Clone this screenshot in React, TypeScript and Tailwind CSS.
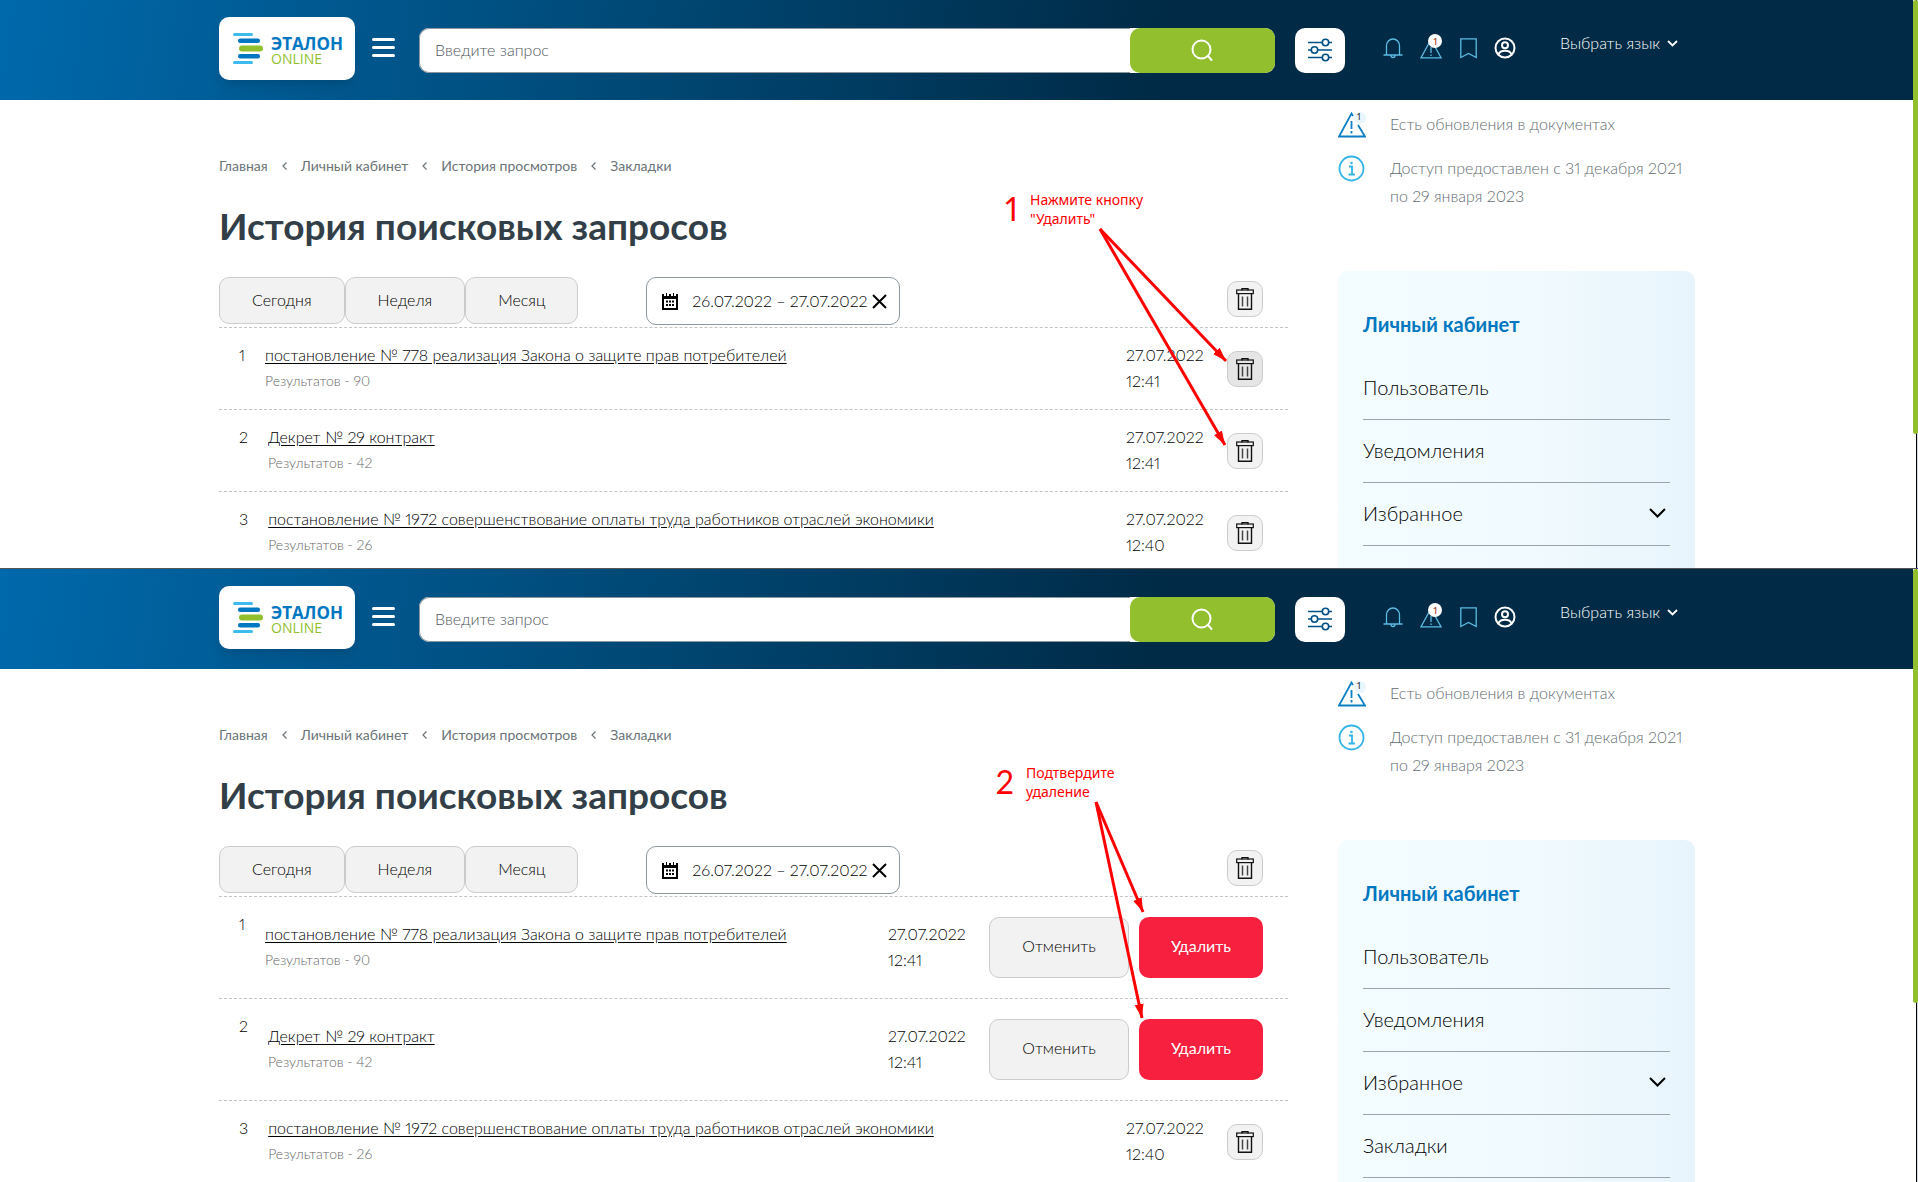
import { useState } from 'react';

type Entry = {
  title: string;
  results: number;
  date: string;
  time: string;
  active?: boolean;
  confirm?: boolean;
};

type Hint = {
  step: string;
  lines: string[];
  offset: string;
  arrows: number[][];
};

type ScreenData = {
  id: string;
  entries: Entry[];
  menu: { label: string; nested?: boolean }[];
  hint: Hint;
  frame: string;
  cardPadding: string;
};

const crumbs = ['Главная', 'Личный кабинет', 'История просмотров', 'Закладки'];
const periods = ['Сегодня', 'Неделя', 'Месяц'];

const screens: ScreenData[] = [
  {
    id: 'select',
    entries: [
      { title: 'постановление № 778 реализация Закона о защите прав потребителей', results: 90, date: '27.07.2022', time: '12:41', active: true },
      { title: 'Декрет № 29 контракт', results: 42, date: '27.07.2022', time: '12:41' },
      { title: 'постановление № 1972 совершенствование оплаты труда работников отраслей экономики', results: 26, date: '27.07.2022', time: '12:40' },
    ],
    menu: [{ label: 'Пользователь' }, { label: 'Уведомления' }, { label: 'Избранное', nested: true }],
    hint: {
      step: '1',
      lines: ['Нажмите кнопку', '"Удалить"'],
      offset: 'top-[90px] right-[144px] w-[114px]',
      arrows: [
        [132, 129, 258, 261],
        [132, 129, 257, 345],
      ],
    },
    frame: 'border-b border-[#555555]',
    cardPadding: 'pb-[22px]',
  },
  {
    id: 'confirm',
    entries: [
      { title: 'постановление № 778 реализация Закона о защите прав потребителей', results: 90, date: '27.07.2022', time: '12:41', confirm: true },
      { title: 'Декрет № 29 контракт', results: 42, date: '27.07.2022', time: '12:41', confirm: true },
      { title: 'постановление № 1972 совершенствование оплаты труда работников отраслей экономики', results: 26, date: '27.07.2022', time: '12:40' },
    ],
    menu: [{ label: 'Пользователь' }, { label: 'Уведомления' }, { label: 'Избранное', nested: true }, { label: 'Закладки' }],
    hint: {
      step: '2',
      lines: ['Подтвердите', 'удаление'],
      offset: 'top-[94px] right-[148px] w-[114px]',
      arrows: [
        [128, 133, 175, 243],
        [128, 133, 174, 349],
      ],
    },
    frame: 'flex-1',
    cardPadding: 'pb-1',
  },
];

function Logo() {
  return (
    <a href="#" aria-label="Эталон Online" className="mb-[3px] flex h-[63px] w-[136px] shrink-0 items-center gap-2 rounded-[10px] bg-white pl-[14px] shadow-lg">
      <svg width="30" height="31" viewBox="0 0 30 31" className="shrink-0">
        <rect x="0" y="0" width="20" height="3" rx="1.5" fill="#3dbbee" />
        <rect x="5" y="5.5" width="22" height="4.500" rx="2" fill="#0077c0" />
        <rect x="6" y="12.500" width="24" height="6" rx="3" fill="#92bf2e" />
        <rect x="5" y="21" width="22" height="4.500" rx="2" fill="#0077c0" />
        <rect x="0" y="28" width="20" height="3" rx="1.5" fill="#3dbbee" />
      </svg>
      <span className="flex flex-col pt-1 font-['Open_Sans',sans-serif]">
        <span className="text-[17px] leading-[16px] font-bold text-[#0077c0]">ЭТАЛОН</span>
        <span className="text-[14px] leading-[14px] font-medium text-[#92bf2e]">ONLINE</span>
      </span>
    </a>
  );
}

function TrashIcon() {
  return (
    <svg width="18" height="22" viewBox="0 0 18 22" fill="none" stroke="#111" strokeWidth="1">
      <path d="M6 2.5V.5h6v2" strokeWidth="1.4" />
      <rect x=".7" y="2" width="16.6" height="3.6" strokeWidth="1.2" />
      <path d="M2.5 5.5v15.8h13V5.5" strokeWidth="1.4" />
      <path d="M6.500 8.500v10M11.500 8.500v10" strokeWidth="1.5" stroke="#444" />
    </svg>
  );
}

function TrashButton({ label, active }: { label: string; active?: boolean }) {
  return (
    <button
      type="button"
      aria-label={label}
      className={`flex size-9 shrink-0 items-center justify-center rounded-[10px] border border-[#cccccc] ${active ? 'bg-[#e5e5e5]' : 'bg-[#f2f2f2]'}`}
    >
      <TrashIcon />
    </button>
  );
}

function Header() {
  return (
    <header className="bg-[linear-gradient(98deg,#0069ab_0%,#004a78_32%,#002a45_61%)]">
      <div className="mx-auto flex h-[100px] max-w-[1477px] items-center pl-px">
        <Logo />
        <button type="button" aria-label="Меню" className="mb-[5px] ml-[17px] flex w-[23px] shrink-0 flex-col gap-[5px]">
          <span className="h-[3px] rounded-full bg-white" />
          <span className="h-[3px] rounded-full bg-white" />
          <span className="h-[3px] rounded-full bg-white" />
        </button>

        {/* Search */}
        <form className="ml-6 flex h-[45px] flex-1 rounded-[10px] bg-white" onSubmit={(e) => e.preventDefault()}>
          <input
            type="search"
            aria-label="Поиск"
            placeholder="Введите запрос"
            className="min-w-0 flex-1 rounded-l-[10px] border border-r-0 border-[#8c979d] px-[15px] text-base placeholder:text-[#4f575d]"
          />
          <button type="submit" aria-label="Найти" className="flex w-[145px] items-center justify-center rounded-[10px] bg-[#92bf2e]">
            <svg width="24" height="24" viewBox="0 0 24 24" fill="none" stroke="#fff" strokeWidth="2" strokeLinecap="round">
              <circle cx="10.500" cy="11.500" r="9" />
              <path d="M17 18l3.500 4" />
            </svg>
          </button>
        </form>

        <button type="button" aria-label="Фильтры" className="ml-5 flex h-[45px] w-[50px] shrink-0 items-center justify-center rounded-[10px] bg-white">
          <svg width="26" height="24" viewBox="0 0 26 24" fill="none" stroke="#004f86" strokeWidth="1.600">
            <path d="M1 4.500h14M22 4.500h3M1 12h3M11 12h14M1 19.500h14M22 19.500h3" />
            <circle cx="18.500" cy="4.500" r="3.200" />
            <circle cx="7.500" cy="12" r="3.200" />
            <circle cx="18.500" cy="19.500" r="3.200" />
          </svg>
        </button>

        {/* User tools */}
        <nav className="ml-[38px] flex w-[133px] shrink-0 items-end justify-between pb-1">
          <a href="#" aria-label="Уведомления">
            <svg width="20" height="21" viewBox="0 0 20 21" fill="none" stroke="#5bbce4" strokeWidth="1.300">
              <path d="M3.500 17V8a6.500 7 0 0 1 13 0v9M.5 17h19M8 17.500a2 2 0 0 0 4 0" />
            </svg>
          </a>
          <a href="#" aria-label="Обновления" className="relative">
            <svg width="22" height="21" viewBox="0 0 22 21" fill="none" stroke="#5bbce4" strokeWidth="1.300">
              <path d="M11 1.500L1 19.800h20zM11 9v6M11 16.500v1.500" />
            </svg>
            <span className="absolute -top-1 left-2 flex size-[14px] items-center justify-center rounded-full bg-white text-[10px] leading-[14px] font-normal text-[#a03020]">1</span>
          </a>
          <a href="#" aria-label="Закладки">
            <svg width="17" height="21" viewBox="0 0 17 21" fill="none" stroke="#5bbce4" strokeWidth="1.300">
              <path d="M.8.8h15.400v18.700l-7.700-4-7.700 4z" />
            </svg>
          </a>
          <a href="#" aria-label="Профиль">
            <svg width="22" height="22" viewBox="0 0 22 22" fill="none" stroke="#fff" strokeWidth="2">
              <circle cx="11" cy="11" r="9.500" />
              <circle cx="11" cy="8.200" r="3" />
              <path d="M4.500 17.500c1.500-5 11.500-5 13 0" />
            </svg>
          </a>
        </nav>

        <div className="ml-11 flex w-[135px] shrink-0 items-center gap-[6px] pb-[14px] text-white">
          <select aria-label="Язык" className="appearance-none bg-transparent text-base text-white">
            <option>Выбрать язык</option>
          </select>
          <svg width="11" height="7" viewBox="0 0 11 7" fill="none" stroke="currentColor" strokeWidth="1.800">
            <path d="M1 1l4.500 4.500L10 1" />
          </svg>
        </div>
      </div>
    </header>
  );
}

function HintOverlay({ hint }: { hint: Hint }) {
  return (
    <>
      <div className={`absolute text-[#ff0000] ${hint.offset}`}>
        <span className="absolute top-[3px] right-full mr-3 text-[32px] leading-[32px] font-normal">{hint.step}</span>
        <p className="font-['Noto_Sans',sans-serif] text-[14px] leading-[19px] font-normal whitespace-nowrap">
          {hint.lines[0]}
          <br />
          {hint.lines[1]}
        </p>
      </div>
      <svg width="320" height="400" viewBox="0 0 320 400" className="pointer-events-none absolute top-0 right-0" stroke="#f00" fill="#f00">
        <defs>
          <marker id={`head-${hint.step}`} markerUnits="userSpaceOnUse" markerWidth="16" markerHeight="10" refX="14" refY="5" orient="auto">
            <path d="M0 .5L14 5 0 9.500z" stroke="none" />
          </marker>
        </defs>
        {hint.arrows.map(([x1, y1, x2, y2]) => (
          <line key={y2} x1={x1} y1={y1} x2={x2} y2={y2} strokeWidth="3" markerEnd={`url(#head-${hint.step})`} />
        ))}
      </svg>
    </>
  );
}

function HistoryRow({ entry, index }: { entry: Entry; index: number }) {
  return (
    <li className="flex items-start border-t border-dashed border-[#c4c4c4] pr-[25px] pb-[14px] pl-5 leading-[26px] last:pb-0">
      <span className="pt-[14px]">{index + 1}</span>
      <div className={`min-w-0 flex-1 pl-5 ${entry.confirm ? 'pt-6' : 'pt-[14px]'}`}>
        <a href="#" className="block truncate underline underline-offset-2">
          {entry.title}
        </a>
        <p className="text-[14px] text-[#666666]">Результатов - {entry.results}</p>
      </div>
      <time className={`w-[101px] shrink-0 ${entry.confirm ? 'pt-6' : 'pt-[14px]'}`}>
        {entry.date}
        <br />
        {entry.time}
      </time>
      {entry.confirm ? (
        <div className="flex shrink-0 gap-[10px] pt-5 pb-[6px]">
          <button type="button" className="h-[61px] w-[140px] rounded-[10px] border border-[#cccccc] bg-[#f2f2f2] pb-[3px]">
            Отменить
          </button>
          <button type="button" className="h-[61px] w-[124px] rounded-[10px] bg-[#f7203e] pb-[3px] font-normal text-white">
            Удалить
          </button>
        </div>
      ) : (
        <div className="pt-[23px] pb-2">
          <TrashButton label="Удалить запрос" active={entry.active} />
        </div>
      )}
    </li>
  );
}

function Sidebar({ menu, cardPadding }: { menu: ScreenData['menu']; cardPadding: string }) {
  return (
    <aside className="flex w-[357px] shrink-0 flex-col">
      <div className="flex flex-col gap-4 pt-[10px] text-base leading-[28px] text-[#646d72]">
        <div className="flex items-start gap-6">
          <svg width="28" height="28" viewBox="0 -2 28 28" fill="none" stroke="#0a7fc4" strokeWidth="1.800" className="shrink-0">
            <path d="M15 4L13.500 1.500 1 24.500h26L20 13" />
            <path d="M13.500 9v8M13.500 19v2.500" />
            <circle cx="22" cy="6" r="6" fill="#e9f6fd" stroke="none" />
            <text x="19" y="8" fontSize="9" fontWeight="400" fill="#222" stroke="none">
              1
            </text>
          </svg>
          <p>Есть обновления в документах</p>
        </div>
        <div className="flex items-start gap-6">
          <svg width="28" height="28" viewBox="0 0 28 28" fill="none" stroke="#33b3e8" strokeWidth="1.800" className="shrink-0">
            <circle cx="13.500" cy="14.500" r="12" />
            <path d="M11 12.500h3v8M10.500 20.500h6.500" />
            <circle cx="13.500" cy="9" r="1.300" fill="#33b3e8" stroke="none" />
          </svg>
          <p>
            Доступ предоставлен с 31 декабря 2021
            <br />
            по 29 января 2023
          </p>
        </div>
      </div>

      <div className={`mt-[61px] flex-1 rounded-t-[10px] bg-linear-to-r from-[#f3fcff] via-[#f1fbff] to-[#e8f4fc] px-[25px] pt-[38px] ${cardPadding}`}>
        <h2 className="text-[20px] leading-[30px] font-bold text-[#0077c0]">Личный кабинет</h2>
        <ul className="mt-[18px]">
          {menu.map((item) => (
            <li key={item.label} className="border-b border-[#9aa5ab]">
              <a href="#" className="flex h-[62px] items-center justify-between pr-1 pb-[2px] text-[20px]">
                {item.label}
                {item.nested && (
                  <svg width="17" height="10" viewBox="0 0 17 10" fill="none" stroke="currentColor" strokeWidth="2">
                    <path d="M1 1l7.500 7.500L16 1" />
                  </svg>
                )}
              </a>
            </li>
          ))}
        </ul>
      </div>
    </aside>
  );
}

function Screen({ screen }: { screen: ScreenData }) {
  const [range, setRange] = useState('26.07.2022 – 27.07.2022');

  return (
    <section className={`flex ${screen.frame}`}>
      <div className="flex min-w-0 flex-1 flex-col">
        <Header />
        <div className="mx-auto flex w-full max-w-[1477px] flex-1 gap-[50px] pl-px">
          <main className="relative min-w-0 flex-1">
            <nav className="flex items-center pt-14 text-[14px] leading-[20px] font-normal text-[#6b7479]">
              {crumbs.map((crumb, i) => (
                <span key={crumb} className="flex items-center">
                  {i > 0 && (
                    <svg width="5" height="8" viewBox="0 0 5 8" fill="none" stroke="currentColor" strokeWidth="1.200" className="mx-[14px]">
                      <path d="M4.500.5L1 4l3.500 3.500" />
                    </svg>
                  )}
                  <a href="#">{crumb}</a>
                </span>
              ))}
            </nav>
            <h1 className="mt-[27px] text-[37px] leading-[46px] font-bold text-[#333f48]">История поисковых запросов</h1>

            {/* Period filters */}
            <div className="mt-7 flex h-[50px] items-start pr-[25px]">
              {periods.map((period) => (
                <button key={period} type="button" className="h-[47px] rounded-[10px] border border-[#cccccc] bg-[#f2f2f2] px-8 pb-[2px]">
                  {period}
                </button>
              ))}
              <div className="ml-[68px] flex h-12 w-[254px] items-center rounded-[10px] border border-[#8c9aa0] pr-3 pl-[15px]">
                <svg width="16" height="17" viewBox="0 0 16 17" fill="#000" className="shrink-0">
                  <path d="M0 1h2v2h2V0h1v3h2V1h2v2h2V0h1v3h2V1h2v16H0zM2 6v9h12V6z" fillRule="evenodd" />
                  <path d="M4 7.500h2v2H4zM7 7.500h2v2H7zM10 7.500h2v2h-2zM4 11h2v2H4zM7 11h2v2H7zM10 11h2v2h-2z" />
                </svg>
                <input
                  type="text"
                  aria-label="Период"
                  value={range}
                  onChange={(e) => setRange(e.target.value)}
                  className="ml-[14px] min-w-0 flex-1 bg-transparent text-base"
                />
                <button type="button" aria-label="Очистить" onClick={() => setRange('')} className="shrink-0">
                  <svg width="15" height="15" viewBox="0 0 15 15" fill="none" stroke="#000" strokeWidth="2">
                    <path d="M1 1l13 13M14 1L1 14" />
                  </svg>
                </button>
              </div>
              <div className="ml-auto pt-1">
                <TrashButton label="Удалить все" />
              </div>
            </div>

            <ul>
              {screen.entries.map((entry, i) => (
                <HistoryRow key={entry.title} entry={entry} index={i} />
              ))}
            </ul>

            <HintOverlay hint={screen.hint} />
          </main>
          <Sidebar menu={screen.menu} cardPadding={screen.cardPadding} />
        </div>
      </div>

      {/* Scroll track */}
      <div className="w-[5px] shrink-0 bg-[linear-gradient(90deg,#fff_0_3px,#000_3px_4px,#d5dbe0_4px)]">
        <div className="h-[434px] rounded-[3px] bg-[#92bf2e]" />
      </div>
    </section>
  );
}

export default function App() {
  return (
    <div className="flex min-h-screen flex-col bg-white font-['Lato','Open_Sans',sans-serif] text-base font-light text-black proportional-nums">
      {screens.map((screen) => (
        <Screen key={screen.id} screen={screen} />
      ))}
    </div>
  );
}
